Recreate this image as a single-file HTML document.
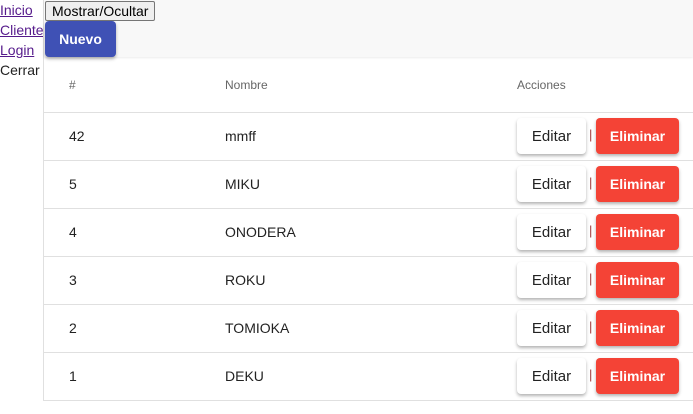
<!DOCTYPE html>
<html><head><style>
body{margin:0;width:693px;height:414px;background:#fff;font-family:"Liberation Sans",Arial,sans-serif;position:relative;overflow:hidden}
.nav{position:absolute;left:0;top:0;font-size:14px;line-height:20px}
.nav a{color:#551a8b;text-decoration:underline;display:block}
.nav span{display:block;color:#222}
.main{position:absolute;left:43px;top:0;right:0;height:401px;border-left:1px solid #e0e0e0;background:#fff}
.top{position:absolute;left:0;top:0;right:0;height:57px;background:#f8f8f8;box-shadow:0 1px 2px rgba(0,0,0,.08)}
.tog{position:absolute;left:1px;top:1px;height:20px;padding:0 6px;font-size:14px;line-height:18px;border:1px solid #767676;border-radius:2px;background:#efefef;box-sizing:border-box;color:#000}
.nuevo{position:absolute;left:1px;top:21px;width:71px;height:36px;background:#3f51b5;color:#fff;font-weight:bold;font-size:14px;line-height:36px;text-align:center;border-radius:4px;box-shadow:0 2px 3px rgba(0,0,0,.3)}
.row{position:absolute;left:0;right:0;height:47px;border-bottom:1px solid #e0e0e0;font-size:14px;color:#222}
.row .c1{position:absolute;left:25px;top:15px}
.row .c2{position:absolute;left:181px;top:15px}
.hd{color:#666;font-size:12px}
.ed{position:absolute;left:473px;top:5px;width:69px;height:36px;background:#fff;border-radius:4px;box-shadow:0 2px 3px rgba(0,0,0,.3);text-align:center;line-height:38px;font-size:15px;color:#222}
.sep{position:absolute;left:545px;top:14px;color:#a04040;font-size:13px}
.el{position:absolute;left:552px;top:5px;width:83px;height:36px;background:#f44336;border-radius:4px;box-shadow:0 2px 3px rgba(0,0,0,.3);text-align:center;line-height:36px;font-size:14px;font-weight:bold;color:#fff}
</style></head><body>
<div class="nav"><a>Inicio</a><a>Cliente</a><a>Login</a><span>Cerrar</span></div>
<div class="main">
<div class="top"></div>
<div class="tog">Mostrar/Ocultar</div>
<div class="nuevo">Nuevo</div>
<div class="row hd" style="top:57px;height:55px"><span class="c1" style="top:21px">#</span><span class="c2" style="top:21px">Nombre</span><span style="position:absolute;left:473px;top:21px">Acciones</span></div>
<div class="row" style="top:113px"><span class="c1">42</span><span class="c2">mmff</span><div class="ed">Editar</div><span class="sep">|</span><div class="el">Eliminar</div></div>
<div class="row" style="top:161px"><span class="c1">5</span><span class="c2">MIKU</span><div class="ed">Editar</div><span class="sep">|</span><div class="el">Eliminar</div></div>
<div class="row" style="top:209px"><span class="c1">4</span><span class="c2">ONODERA</span><div class="ed">Editar</div><span class="sep">|</span><div class="el">Eliminar</div></div>
<div class="row" style="top:257px"><span class="c1">3</span><span class="c2">ROKU</span><div class="ed">Editar</div><span class="sep">|</span><div class="el">Eliminar</div></div>
<div class="row" style="top:305px"><span class="c1">2</span><span class="c2">TOMIOKA</span><div class="ed">Editar</div><span class="sep">|</span><div class="el">Eliminar</div></div>
<div class="row" style="top:353px"><span class="c1">1</span><span class="c2">DEKU</span><div class="ed">Editar</div><span class="sep">|</span><div class="el">Eliminar</div></div>
</div>
</body></html>
